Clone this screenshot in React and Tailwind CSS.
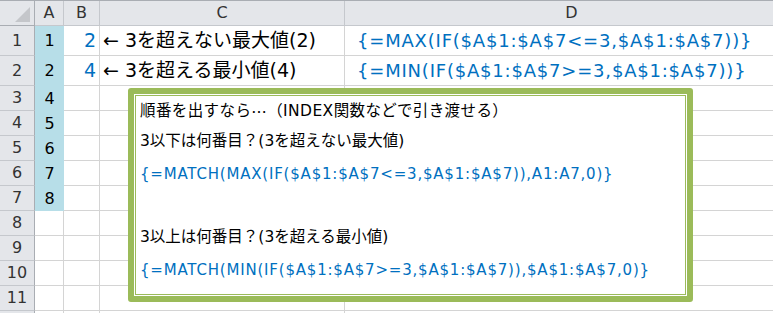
import React from "react";

const rows = [
  { n: "1", h: "h-[30px]", a: "1", b: "2", c: "← 3を超えない最大値(2)", d: "{=MAX(IF($A$1:$A$7<=3,$A$1:$A$7))}" },
  { n: "2", h: "h-[30px]", a: "2", b: "4", c: "← 3を超える最小値(4)", d: "{=MIN(IF($A$1:$A$7>=3,$A$1:$A$7))}" },
  { n: "3", h: "h-[25px]", a: "4" },
  { n: "4", h: "h-[25px]", a: "5" },
  { n: "5", h: "h-[25px]", a: "6" },
  { n: "6", h: "h-[25px]", a: "7" },
  { n: "7", h: "h-[25px]", a: "8" },
  { n: "8", h: "h-[25px]" },
  { n: "9", h: "h-[25px]" },
  { n: "10", h: "h-[25px]" },
  { n: "11", h: "h-[25px]" },
  { n: "", h: "h-[25px]" },
];

const font = "font-['DejaVu_Sans','Noto_Sans_CJK_JP',sans-serif]";

export default function App() {
  return (
    <div className={`relative w-[773px] h-[313px] overflow-hidden bg-white ${font}`}>
      {/* column headers */}
      <div className="flex h-[26px] border-t border-[#a9adb3] bg-[#e4e6ea] text-[16px] text-[#333]">
        <div className="relative w-[35px] shrink-0 border-r border-b border-[#a9adb3]">
          <div className="absolute right-[4px] bottom-[3px] w-0 h-0 border-l-[15px] border-l-transparent border-b-[15px] border-b-[#c4c6ca]" />
        </div>
        <div className="w-[29px] shrink-0 border-r border-b border-[#c5c8cd] flex items-center justify-center">A</div>
        <div className="w-[36px] shrink-0 border-r border-b border-[#c5c8cd] flex items-center justify-center">B</div>
        <div className="w-[245px] shrink-0 border-r border-b border-[#c5c8cd] flex items-center justify-center">C</div>
        <div className="w-[454px] shrink-0 border-r border-b border-[#c5c8cd] flex items-center justify-center">D</div>
      </div>

      {/* rows */}
      {rows.map((r, i) => (
        <div key={i} className={`flex ${r.h}`}>
          <div className="w-[35px] shrink-0 bg-[#e4e6ea] border-r border-b border-r-[#a9adb3] border-b-[#c5c8cd] flex items-center justify-center text-[16px] text-[#333]">
            {r.n}
          </div>
          <div
            className={
              r.a
                ? "w-[29px] shrink-0 bg-[#b7dee8] flex items-center justify-center text-[16px] text-black"
                : "w-[29px] shrink-0 border-r border-b border-[#d4d4d4]"
            }
          >
            {r.a}
          </div>
          <div className="w-[36px] shrink-0 border-r border-b border-[#d4d4d4] flex items-center justify-end pr-[3px] text-[19px] text-[#0070c0]">
            {r.b}
          </div>
          <div className="w-[245px] shrink-0 border-r border-b border-[#d4d4d4] flex items-center pl-[3px] text-[19px] text-black whitespace-nowrap">
            {r.c}
          </div>
          <div className="w-[454px] shrink-0 border-r border-b border-[#d4d4d4] flex items-center pl-[12px] text-[18px] tracking-[0.8px] text-[#0070c0] whitespace-nowrap">
            {r.d}
          </div>
        </div>
      ))}

      {/* text box */}
      <div className="absolute left-[128px] top-[88px] w-[565px] h-[214px] rounded-[3px] border-[6px] border-[#9bbb59] bg-white p-px">
        <div className="h-full border border-[#9bbb59] pl-[4px] text-[15.5px] text-black whitespace-nowrap">
          <div className="h-[28px] flex items-center mt-[2px] tracking-[0.4px]">
            順番を出すなら<span className="font-['Noto_Sans_CJK_JP',sans-serif]">…</span>（INDEX関数などで引き渡せる）
          </div>
          <div className="h-[32px] flex items-center">3以下は何番目？(3を超えない最大値)</div>
          <div className="h-[32px] flex items-center text-[15px] tracking-[0.8px] text-[#0070c0]">{"{=MATCH(MAX(IF($A$1:$A$7<=3,$A$1:$A$7)),A1:A7,0)}"}</div>
          <div className="h-[32px]" />
          <div className="h-[32px] flex items-center">3以上は何番目？(3を超える最小値)</div>
          <div className="h-[32px] flex items-center text-[15px] tracking-[0.8px] text-[#0070c0]">{"{=MATCH(MIN(IF($A$1:$A$7>=3,$A$1:$A$7)),$A$1:$A$7,0)}"}</div>
        </div>
      </div>
    </div>
  );
}
